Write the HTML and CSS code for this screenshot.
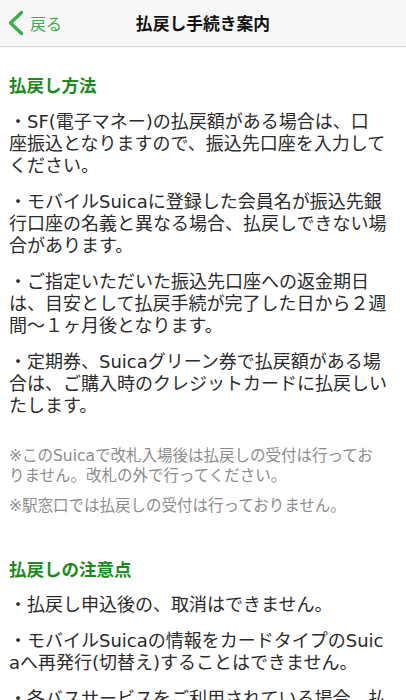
FILE: index.html
```html
<!DOCTYPE html>
<html lang="ja">
<head>
<meta charset="utf-8">
<title>払戻し手続き案内</title>
<link rel="stylesheet" href="styles.css">
</head>
<body>
<header class="navbar">
  <a class="back" href="#">
    <svg class="chev" width="17" height="26" viewBox="0 0 17 26"><path d="M14.5 2.5 L3.5 13 L14.5 23.5" fill="none" stroke="currentColor" stroke-width="3.4" stroke-linecap="round" stroke-linejoin="round"/></svg>
    <span>戻る</span>
  </a>
  <h1 class="nav-title">払戻し手続き案内</h1>
  <span></span>
</header>
<main class="content">
  <section class="section">
    <h2 class="sec-title">払戻し方法</h2>
    <p class="item">・SF(電子マネー)の払戻額がある場合は、口<br>座振込となりますので、振込先口座を入力してください。</p>
    <p class="item">・モバイルSuicaに登録した会員名が振込先銀行口座の名義と異なる場合、払戻しできない場合があります。</p>
    <p class="item">・ご指定いただいた振込先口座への返金期日は、目安として払戻手続が完了した日から２週間〜１ヶ月後となります。</p>
    <p class="item">・定期券、Suicaグリーン券で払戻額がある場合は、ご購入時のクレジットカードに払戻しいたします。</p>
    <p class="note">※このSuicaで改札入場後は払戻しの受付は行っておりません。改札の外で行ってください。</p>
    <p class="note">※駅窓口では払戻しの受付は行っておりません。</p>
  </section>
  <section class="section">
    <h2 class="sec-title">払戻しの注意点</h2>
    <p class="item">・払戻し申込後の、取消はできません。</p>
    <p class="item">・モバイルSuicaの情報をカードタイプのSuicaへ再発行(切替え)することはできません。</p>
    <p class="item">・各バスサービスをご利用されている場合、払戻し前にバスサービスの解除を行ってください。</p>
  </section>
</main>
</body>
</html>
```
FILE: styles.css
```css
html, body {
  margin: 0;
  padding: 0;
  background: #ffffff;
}
body {
  font-family: "DejaVu Sans", "Noto Sans CJK JP", sans-serif;
  color: #2b2b2b;
}
.navbar {
  height: 46px;
  display: grid;
  grid-template-columns: 1fr auto 1fr;
  align-items: center;
  background: #f7f7f7;
  border-bottom: 1px solid #d4d4d4;
  box-shadow: 0 1px 1px rgba(0,0,0,0.04);
  font-family: "Noto Sans CJK JP", sans-serif;
}
.back {
  display: flex;
  align-items: center;
  gap: 6px;
  padding-left: 7px;
  color: #3aaf47;
  text-decoration: none;
  font-size: 16px;
  line-height: 1;
}
.chev {
  display: block;
}
.nav-title {
  margin: 0;
  font-size: 16.8px;
  font-weight: 700;
  color: #111;
  line-height: 1;
}
.content {
  padding: 0 17px 0 9px;
}
.section {
  padding-top: 26px;
}
.section + .section {
  padding-top: 31px;
}
.sec-title {
  margin: 0 0 14px;
  font-family: "Noto Sans CJK JP", sans-serif;
  font-size: 17.5px;
  line-height: 24px;
  font-weight: 700;
  color: #1d8a1d;
}
.section + .section .sec-title {
  margin-bottom: 13px;
}
.item {
  margin: 0 0 14px;
  font-size: 18px;
  line-height: 22px;
  color: #2b2b2b;
  word-break: break-all;
}
.note {
  margin: 0 0 10px;
  padding-right: 8px;
  font-size: 15.5px;
  line-height: 20px;
  color: #8c8c8c;
  word-break: break-all;
}
.item + .note {
  margin-top: 29px;
}
```
